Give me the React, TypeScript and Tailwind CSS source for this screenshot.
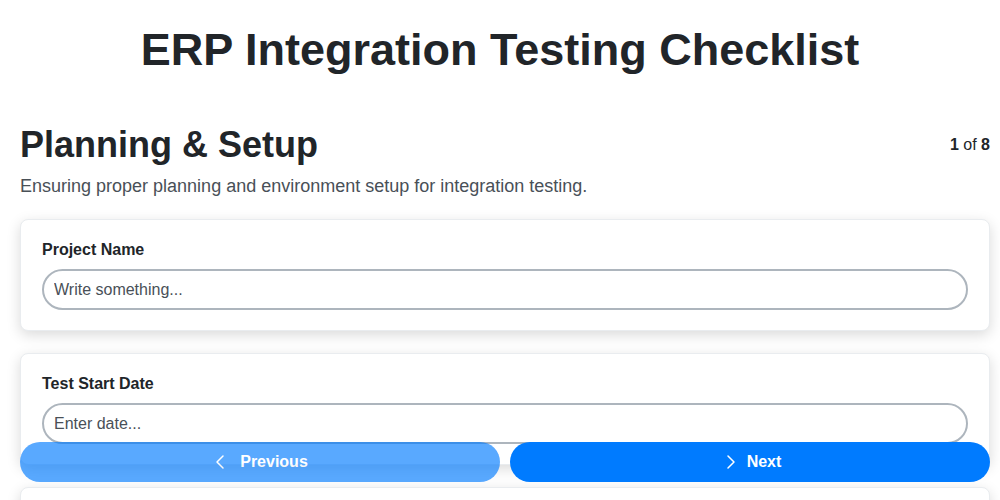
import { ChevronLeft, ChevronRight } from "lucide-react";

const fields = [
  { label: "Project Name", placeholder: "Write something..." },
  { label: "Test Start Date", placeholder: "Enter date..." },
  { label: "Test End Date", placeholder: "Enter date..." },
  { label: "Test Environment", placeholder: "Write something..." },
];

export default function App() {
  return (
    <main className="min-h-screen bg-white font-['Liberation_Sans',Arial,sans-serif] text-[#212529] pb-24">
      <h1 className="pt-[23px] text-center text-[45px] leading-[1.2] font-bold">
        ERP Integration Testing Checklist
      </h1>

      <section className="pl-5 pr-2.5 mt-[46px]">
        <div className="flex items-center justify-between">
          <h2 className="text-[36px] leading-[1.2] font-bold">Planning &amp; Setup</h2>
          <div className="text-[16px]">
            <span className="font-bold">1</span> of <span className="font-bold">8</span>
          </div>
        </div>
        <p className="mt-[7px] text-[18px] leading-[27px] text-[#495057]">
          Ensuring proper planning and environment setup for integration testing.
        </p>

        <div className="mt-[19px]">
          {fields.map((f) => (
            <div
              key={f.label}
              className="mb-[22px] rounded-lg border border-[#e9ecef] bg-white px-[21px] pt-[18px] pb-5 shadow-[0_4px_14px_rgba(0,0,0,0.15)]"
            >
              <label className="block text-[16px] leading-6 font-bold mb-[7px]">{f.label}</label>
              <input
                type="text"
                placeholder={f.placeholder}
                className="block h-[41px] w-full rounded-full border-2 border-[#adb5bd] bg-white px-2.5 text-[16px] text-[#212529] placeholder:text-[#495057] outline-none"
              />
            </div>
          ))}
        </div>
      </section>

      <div className="fixed bottom-[18px] left-5 right-2.5 flex gap-2.5">
        <button className="flex h-10 flex-1 items-center justify-center rounded-full bg-[#007bff] text-[16px] font-bold text-white opacity-65">
          <ChevronLeft size={24} strokeWidth={1.5} className="mr-2" />
          <span className="mr-1">Previous</span>
        </button>
        <button className="flex h-10 flex-1 items-center justify-center rounded-full bg-[#007bff] text-[16px] font-bold text-white">
          <ChevronRight size={24} strokeWidth={1.5} className="mr-1" />
          Next
        </button>
      </div>
    </main>
  );
}
